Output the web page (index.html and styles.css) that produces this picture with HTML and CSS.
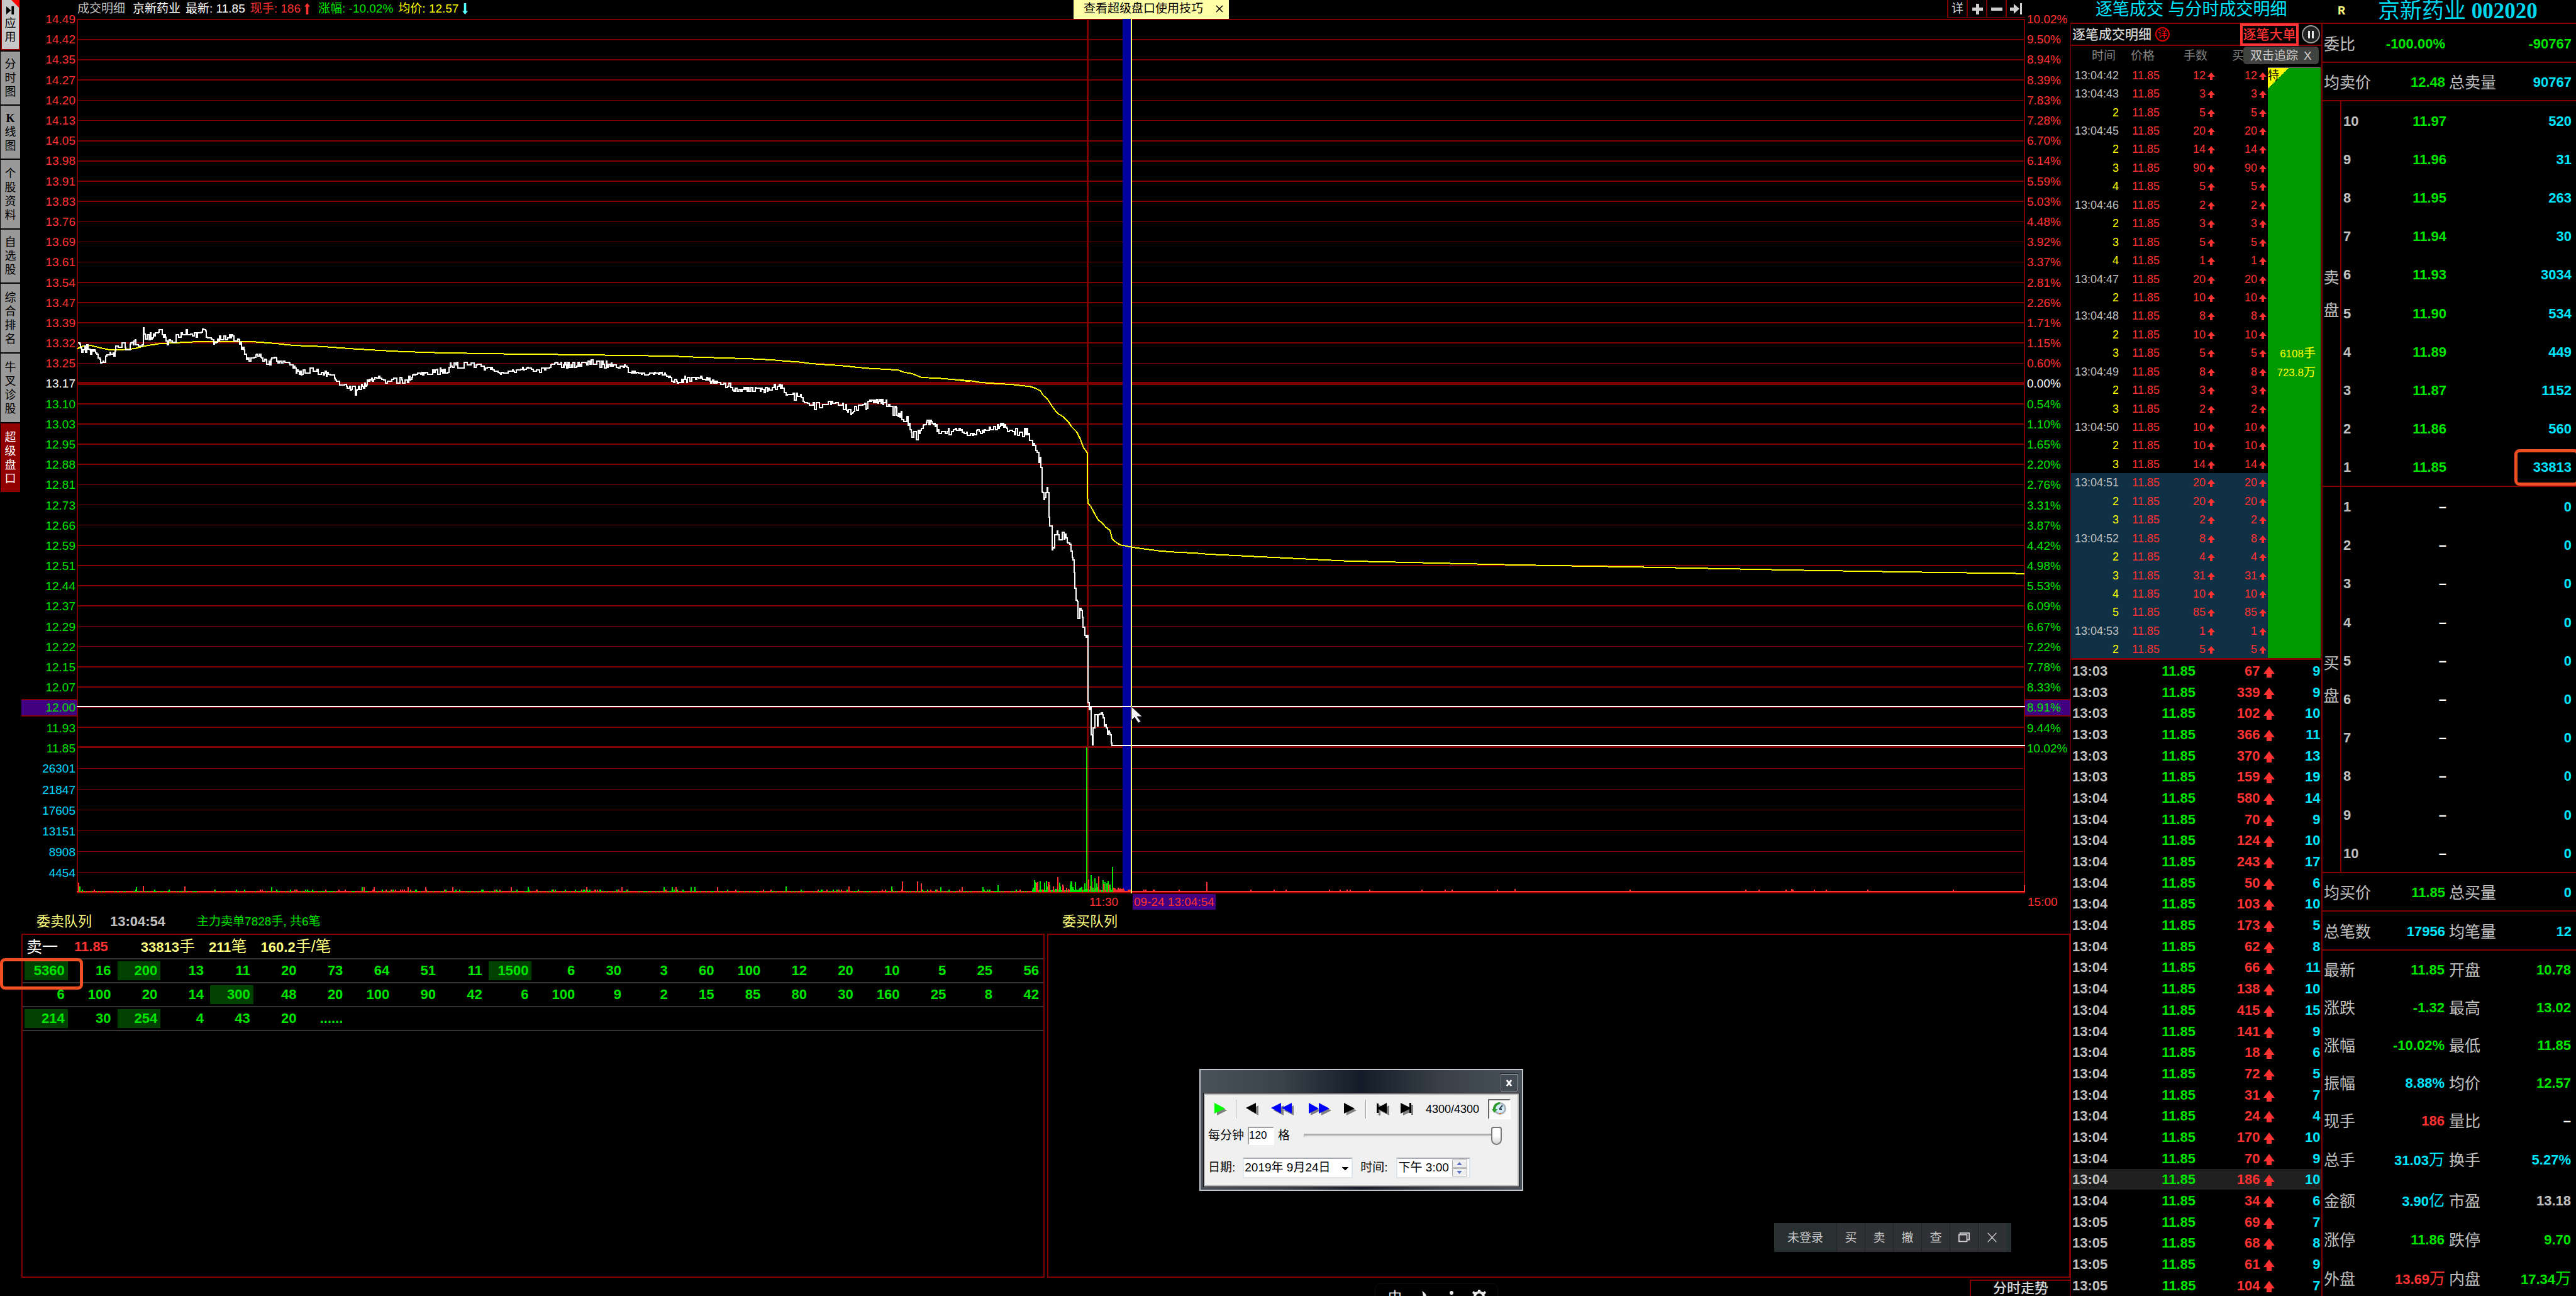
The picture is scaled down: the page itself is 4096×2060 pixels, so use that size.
FILE: index.html
```html
<!DOCTYPE html>
<html lang="zh-CN">
<head>
<meta charset="utf-8">
<title>京新药业 002020 超级盘口</title>
<link rel="stylesheet" href="styles.css">
</head>
<body>
<div class="app">

  <nav class="side">
    <button class="side-tab is-top" type="button">
      <svg class="side-arrow" viewBox="0 0 16 16"><path d="M1 1v14l8-7zM10 1h4v14h-4z"/></svg>应用</button>
    <button class="side-tab" type="button">分时图</button>
    <button class="side-tab" type="button"><b class="serif">K</b>线图</button>
    <button class="side-tab is-long" type="button">个股资料</button>
    <button class="side-tab" type="button">自选股</button>
    <button class="side-tab is-long" type="button">综合排名</button>
    <button class="side-tab is-long" type="button">牛叉诊股</button>
    <button class="side-tab is-long is-active" type="button">超级盘口</button>
  </nav>

  <main class="center">
    <header class="info">
      <span class="silver">成交明细</span>
      <span class="info-name">京新药业</span>
      <span>最新: 11.85</span>
      <span class="red">现手: 186<svg class="info-arrow" viewBox="0 0 10 20"><path fill="#ff3232" d="M5 0l5 6H7v14H3V6H0z"/></svg></span>
      <span class="green">涨幅: -10.02%</span>
      <span class="yellow">均价: 12.57<svg class="info-arrow" viewBox="0 0 10 20"><path fill="#54ffff" d="M5 20l5-6H7V0H3v14H0z"/></svg></span>
      <div class="tools">
        <button type="button">详</button>
        <button type="button" aria-label="放大"><svg viewBox="0 0 20 20"><path d="M8 2h5v6h6v5h-6v6H8v-6H2V8h6z"/></svg></button>
        <button type="button" aria-label="缩小"><svg viewBox="0 0 20 20"><path d="M1 8h18v5H1z"/></svg></button>
        <button type="button" aria-label="到末尾"><svg viewBox="0 0 20 20"><path d="M0 8h6V2l9 8-9 8v-5H0zM16 1h3v18h-3z"/></svg></button>
      </div>
      <div class="tip"><a href="#">查看超级盘口使用技巧</a><button type="button" aria-label="关闭"><svg viewBox="0 0 12 12"><path d="M1 1l10 10M11 1L1 11" stroke="#000" stroke-width="1.5"/></svg></button></div>
    </header>

    <section class="plot">
      <ol class="axis axis-left" id="axisLeft"></ol>
      <svg class="chart" id="chart" viewBox="153 37 3872 1740" preserveAspectRatio="none"></svg>
      <ol class="axis axis-right" id="axisRight"></ol>
      <svg class="pointer" viewBox="0 0 18 28"><path d="M1 1v22l5-5 6 9 4-2-6-8h8z" fill="#f4f4f4" stroke="#223"/></svg>
    </section>

    <div class="times">
      <span class="t-noon">11:30</span><span class="t-now">09-24 13:04:54</span><span class="t-end">15:00</span>
    </div>

    <div class="queue-titles">
      <h2><span>委卖队列</span><b>13:04:54</b><span class="note">主力卖单7828手, 共6笔</span></h2>
      <h2><span>委买队列</span></h2>
    </div>

    <section class="queues">
      <div class="queue">
        <p class="queue-head"><span class="cn white">卖一</span><b class="red q-price">11.85</b><b>33813<span class="cn">手</span></b><b>211<span class="cn">笔</span></b><b>160.2<span class="cn">手/笔</span></b></p>
        <table class="lots" id="lots"></table>
      </div>
      <div class="queue queue-buy">
        <form class="replay">
          <div class="replay-bar"><button class="replay-close" type="button" aria-label="关闭"><svg viewBox="0 0 12 14"><path d="M2 2l8 10M10 2L2 12" stroke="#fff" stroke-width="3"/></svg></button></div>
          <div class="replay-body">
            <div class="replay-tools">
              <button type="button" aria-label="播放"><svg width="20" height="20"><path fill="#808080" d="M4 4v16l16-8z"/><path fill="#0f0" d="M0 0v17l17-8z"/></svg></button>
              <i class="sep"></i>
              <button type="button" aria-label="后退"><svg width="20" height="20"><path fill="#808080" d="M20 4v16L6 12z"/><path d="M16 0v17L0 8z"/></svg></button>
              <button type="button" aria-label="快退"><svg width="36" height="20"><path fill="#808080" d="M20 4v16L4 12zM36 4v16L20 12z"/><path fill="#00f" d="M16 0v17L0 8zM33 0v17L17 8z"/></svg></button>
              <button type="button" aria-label="快进"><svg width="36" height="20"><path fill="#808080" d="M3 4v16l16-8zM20 4v16l16-8z"/><path fill="#00f" d="M0 0v17l16-8zM16 0v17l17-8z"/></svg></button>
              <button class="at-start" type="button" aria-label="前进"><svg width="20" height="20"><path fill="#808080" d="M4 4v16l16-8z"/><path d="M0 0v17l17-8z"/></svg></button>
              <i class="sep"></i>
              <button type="button" aria-label="到开头"><svg width="20" height="20"><path fill="#808080" d="M3 4h3v7l14-7v16L6 13v7H3z"/><path d="M0 1h3v6l13-7v17L3 10v6H0z"/></svg></button>
              <button type="button" aria-label="到结尾"><svg width="20" height="20"><path fill="#808080" d="M20 3h-3v7L4 4v16l13-6v5h3z"/><path d="M17 0h-3v7L0 0v17l14-7v6h3z"/></svg></button>
              <output>4300/4300</output>
              <button class="replay-clock" type="button" aria-label="历史"><svg width="24" height="26" viewBox="0 0 24 26"><circle cx="13" cy="12" r="10" fill="#a9b4bd"/><circle cx="13" cy="12" r="7" fill="#d3ecfa"/><path d="M13 2C6 2 2 7 2 13H0l4 6 5-6H6c0-4 3-8 7-8z" fill="#2c9a2c"/><path d="M12 13l5-6M12 13h4" stroke="#345" stroke-width="2"/><path d="M12 19h3v2h-3z" fill="#e07020"/></svg></button>
            </div>
            <div class="replay-line"><label for="speed">每分钟</label><input id="speed" class="speed" value="120"><span>格</span><input class="range" type="range" aria-label="速度" min="0" max="120" value="120"></div>
            <div class="replay-line"><label for="day">日期:</label><select id="day"><option>2019年 9月24日</option></select><label for="clock">时间:</label><span class="spin"><input id="clock" value="下午 3:00"><span class="spin-keys"><button type="button" aria-label="加"><svg viewBox="0 0 10 6"><path d="M5 0l5 6H0z"/></svg></button><button type="button" aria-label="减"><svg viewBox="0 0 10 6"><path d="M0 0h10L5 6z"/></svg></button></span></span></div>
          </div>
        </form>
        <div class="trade"><span>未登录</span><button type="button">买</button><button type="button">卖</button><button type="button">撤</button><button type="button">查</button><button type="button" aria-label="窗口"><svg viewBox="0 0 22 20"><path d="M2 5h14v12H2zM4 4V2h16v12h-3" fill="none" stroke="#d0d0d0" stroke-width="2"/></svg></button><button type="button" aria-label="关闭"><svg viewBox="0 0 22 20"><path d="M3 2l15 16M18 2L3 18" stroke="#c8c8c8" stroke-width="1.5"/></svg></button></div>
      </div>
    </section>

    <footer class="foot">
      <div class="ime"><span>中</span><svg width="16" height="22"><path fill="#eee" d="M3 2c6 3 9 8 8 20H0C5 16 6 9 3 2z"/></svg><svg width="8" height="20"><circle cx="4" cy="5" r="3" fill="#eee"/></svg><svg width="22" height="22" viewBox="0 0 22 22"><circle cx="11" cy="11" r="7" fill="none" stroke="#eee" stroke-width="4"/><path d="M9 0h4v4H9zM2 2l4 3-3 3-3-3zM20 2l-4 3 3 3 3-3z" fill="#eee"/></svg></div>
      <button class="foot-tab" type="button">分时走势</button>
    </footer>
  </main>

  <section class="ticks">
    <h1 class="ticks-title">逐笔成交 与分时成交明细</h1>
    <div class="ticks-head"><h2>逐笔成交明细</h2><a class="detail" href="#">详</a><button class="big" type="button">逐笔大单</button><button class="pause" type="button" aria-label="暂停"><i></i><i></i></button></div>
    <div class="ticks-cols"><span>时间</span><span>价格</span><span>手数</span><span>买</span><div class="hint">双击追踪<button type="button" aria-label="关闭提示">X</button></div></div>
    <div class="ticks-body">
      <table class="tape" id="tape"></table>
      <div class="block"><span class="tag">特</span><span>6108<span class="cn-s">手</span></span><span>723.8<span class="cn-s">万</span></span></div>
    </div>
    <table class="minutes" id="minutes"></table>
  </section>

  <aside class="quote">
    <h1><span class="flag">R</span><span>京新药业 <b>002020</b></span></h1>
    <table class="stats ruled" id="stat0"></table>
    <table class="stats ruled" id="stat1"></table>
    <div class="book"><div class="book-side">卖<br>盘</div><table id="asks"></table></div>
    <div class="book"><div class="book-side">买<br>盘</div><table id="bids"></table></div>
    <table class="stats ruled" id="stat2"></table>
    <table class="stats ruled" id="stat3"></table>
    <table class="stats" id="stat4"></table>
  </aside>
</div>
<script src="app.js"></script>
</body>
</html>
```
FILE: styles.css
```css
* { box-sizing: border-box; }
html, body { margin: 0; height: 100%; background: #000; }
body {
  font: 19px/24px "Liberation Sans", "Noto Sans CJK SC", sans-serif;
  color: #fff;
  overflow: hidden;
}
h1, h2, p, ol { margin: 0; padding: 0; font-weight: 400; font-size: inherit; list-style: none; }
button, input, select { font: inherit; color: inherit; border: 0; padding: 0; margin: 0; background: none; border-radius: 0; }
a { color: inherit; text-decoration: none; }
table { border-collapse: collapse; border-spacing: 0; width: 100%; height: 100%; table-layout: fixed; }
td, th { padding: 0; text-align: right; white-space: nowrap; }
svg { display: block; }
.red { color: #ff3232; }
.green { color: #00e600; }
.yellow { color: #ffff00; }
.cyan { color: #00e6ff; }
.white { color: #fff; }
.silver { color: #c0c0c0; }
.serif { font-family: "Liberation Serif", serif; }
.cn { font-size: 25px; font-weight: 400; }
.cn-s { font-size: 19px; }

.app { display: grid; grid-template-columns: 34px 1fr 399px 405px; height: 100vh; }

/* left tab strip */
.side { display: flex; flex-direction: column; gap: 2px; padding: 0 1px; }
.side-tab {
  width: 31px; height: 84px; padding: 0 6px; background: #999; color: #000;
  font-size: 18px; line-height: 22px; word-break: break-all; position: relative;
}
.side-tab.is-long { height: 109px; }
.side-tab.is-top { height: 80px; background: #c8c8c8; border: 2px solid #900000; border-top: 0; padding: 0 4px; }
.side-tab.is-top::after {
  content: ""; position: absolute; top: 0; right: 0;
  border: 6px solid; border-color: #f00 #f00 transparent transparent;
}
.side-tab.is-active { background: #900000; color: #fff; }
.side-arrow { width: 15px; height: 15px; margin: 0 auto 2px; }

/* centre column */
.center { display: grid; grid-template-columns: minmax(0, 1fr); grid-template-rows: 30px 1390fr 25px 39px 547fr 29px; min-width: 0; min-height: 0; }
.info { display: flex; align-items: center; gap: 8px; padding: 0 72px 2px 89px; position: relative; white-space: pre; }
.info-name { margin-left: 4px; }
.info-arrow { display: inline-block; width: 9px; height: 18px; margin: 0 5px 0 6px; vertical-align: -3px; }
.tools { margin-left: auto; display: flex; align-self: flex-start; }
.tools button { width: 31px; height: 28px; border-left: 2px solid #800000; display: grid; place-items: center; color: #d0d0d0; border-bottom: 1px solid #800000; }
.tools svg { width: 20px; height: 20px; fill: #d0d0d0; }
.tip {
  position: absolute; left: 1673px; top: 0; width: 247px; height: 30px; z-index: 2;
  background: #ffffa8; color: #000; display: flex; align-items: center; padding: 0 0 3px 16px; gap: 20px;
}
.tip svg { width: 12px; height: 12px; }

.plot { display: grid; grid-template-columns: 88px 1fr 72px; min-height: 0; position: relative; }
.chart { width: 100%; height: 100%; min-height: 0; shape-rendering: crispEdges; }
.axis { display: grid; margin: -15px 0 -1px; position: relative; }
.axis-left { grid-template-rows: repeat(37, 322fr) repeat(6, 331fr) 166fr; text-align: right; }
.axis-right { grid-template-rows: repeat(37, 322fr) 2152fr; }
.axis li { display: grid; align-items: center; min-height: 0; line-height: 28px; color: #ff3232; }
.axis-left span { padding-right: 2px; }
.axis-right span { padding-left: 3px; }
.axis .is-flat { color: #fff; }
.axis .is-down { color: #00e600; }
.axis .is-vol { color: #00d8ff; }
.axis .is-cross span { background: #400080; border: 1px solid #800000; border-width: 2px 0; line-height: 24px; }
.pointer { position: absolute; left: 1764px; top: 1092px; width: 18px; height: 28px; }

.times { position: relative; color: #ff3232; }
.times span { position: absolute; top: 1px; line-height: 25px; }
.t-noon { left: 1698px; }
.t-now { left: 1767px; padding: 0 2px; background: #400080; }
.t-end { right: 8px; width: 60px; }

.queue-titles, .queues { display: grid; grid-template-columns: minmax(0, 1fr) minmax(0, 1fr); gap: 4px; }
.queue-titles h2 { display: flex; align-items: center; padding-left: 24px; color: #ffff80; font-size: 22px; }
.queue-titles b { color: #c0c0c0; margin-left: 29px; }
.note { font-size: 19px; color: #00e600; margin-left: 50px; }
.queue { border: 2px solid #800000; position: relative; min-height: 0; }
.queue-head { display: flex; align-items: center; height: 37px; font-size: 22px; padding-left: 6px; color: #ffff80; }
.queue-head b { margin-right: 22px; }
.queue-head .q-price { margin: 0 52px 0 26px; }
.lots { height: auto; border-top: 2px solid #333; }
.lots tr { height: 38px; border-bottom: 2px solid #333; }
.lots td { font-size: 22px; font-weight: 700; color: #00e600; padding: 0 2px 0 3px; position: relative; }
.lots span { display: block; line-height: 30px; padding-right: 5px; }
.lots .is-big span { background: #004000; }
.ring { position: absolute; border: 5px solid #f04e23; border-radius: 8px; pointer-events: none; }
.lots .ring { left: -36px; top: -2px; width: 132px; height: 50px; padding: 0; z-index: 2; }

/* replay window */
.replay {
  position: absolute; left: 240px; top: 213px; width: 515px; height: 194px;
  border: 2px solid #c4c8cc; padding: 0 5px 5px; color: #000;
  background: linear-gradient(90deg, #49515b, #3a424b 25%, #131c28 50%, #394049 75%, #49515b);
}
.replay-bar { height: 37px; position: relative; }
.replay-close { position: absolute; right: 1px; top: 5px; width: 29px; height: 30px; border: 2px solid #a8adb2; outline: 1px solid #20252c; outline-offset: -1px; background: #434b55; display: grid; place-items: center; }
.replay-close svg { width: 11px; height: 13px; }
.replay-body { border: 2px solid #b4b4b4; outline: 1px solid #000; background: #f0f0f0; height: 148px; padding-top: 4px; font-size: 19px; }
.replay-tools { display: grid; grid-template-columns: 49px 2px 48px 48px 72px 36px 2px 52px 24px 117px 36px; height: 38px; align-items: center; justify-items: center; }
.replay-tools .at-start { justify-self: start; margin-left: 2px; }
.sep { width: 2px; height: 30px; background: #a0a0a0; border-right: 1px solid #fff; }
.replay output { font-size: 18px; padding-left: 4px; }
.replay-clock { width: 36px; height: 32px; background: #fafafa; border: 2px solid #fff; border-color: #666 #fff #fff #666; display: grid; place-items: center; }
.replay-line { display: flex; align-items: center; height: 46px; padding-left: 5px; }
.replay-line + .replay-line { height: 56px; }
.speed { width: 42px; height: 29px; background: #fff; border: 2px solid #a0a0a0; border-right-color: #fff; border-bottom-color: #fff; font-size: 17px; margin: 0 6px 0 6px; }
.range { -webkit-appearance: none; appearance: none; width: 315px; height: 30px; margin-left: 22px; }
.range::-webkit-slider-runnable-track { height: 6px; background: #e7eaea; border-top: 3px solid #b0b0b0; border-left: 1px solid #a0a0a0; }
.range::-webkit-slider-thumb { -webkit-appearance: none; width: 17px; height: 29px; margin-top: -14px; border: 2px solid #777; border-radius: 4px 4px 9px 9px; background: linear-gradient(#fff 50%, #d4d4d4); }
.replay select { width: 175px; height: 33px; border: 2px solid #e0e6ee; border-top-color: #aaaeb4; margin: 0 12px 0 12px; -webkit-appearance: none; appearance: none; padding-left: 1px; font-size: 19px;
  background: linear-gradient(45deg, transparent 6px, #000 0) no-repeat 154px 13px / 7px 7px, linear-gradient(-45deg, transparent 6px, #000 0) no-repeat 161px 13px / 7px 7px, #fff; }
.spin { display: flex; width: 118px; height: 33px; margin-left: 13px; background: #fff; border: 2px solid #e0e6ee; border-top-color: #aaaeb4; }
.spin input { width: 87px; padding-left: 2px; font-size: 19px; }
.spin-keys { display: grid; gap: 1px; width: 24px; padding: 1px 0; }
.spin-keys button { background: #eee; border: 1px solid #aaa; display: grid; place-items: center; }
.spin-keys svg { width: 9px; height: 5px; fill: #5a70c0; }

.trade { position: absolute; right: 92px; bottom: 39px; height: 46px; display: flex; background: #283032; padding-right: 8px; color: #c8c8c8; line-height: 48px; }
.trade span { width: 99px; text-align: center; }
.trade button { width: 45px; background: #2f3135; border-left: 1px solid #222528; display: grid; place-items: center; }
.trade svg { width: 20px; height: 18px; }

.foot { display: flex; justify-content: flex-end; position: relative; padding-top: 3px; overflow: hidden; }
.foot-tab { width: 160px; border: 2px solid #800000; border-width: 2px 0 0 2px; font-size: 22px; font-weight: 500; color: #d8d8d8; line-height: 24px; }
.ime { position: absolute; left: 2152px; top: 9px; width: 196px; height: 48px; border: 1px solid #0e0e0e; border-radius: 8px; display: flex; justify-content: space-between; padding: 9px 18px 0 20px; color: #eee; font-size: 22px; }

/* tick tape */
.ticks { display: grid; grid-template-rows: 36px 37px 31px 945fr 1011fr; grid-template-columns: minmax(0, 1fr); min-height: 0; position: relative; }
.ticks-title { padding-left: 40px; font-size: 27px; line-height: 30px; color: #00e6ff; white-space: nowrap; }
.ticks-head, .ticks-cols, .ticks-body, .minutes { border-left: 1px solid #800000; }
.ticks-head { border-top: 2px solid #800000; border-bottom: 2px solid #800000; display: flex; align-items: center; padding: 0 2px; }
.ticks-head h2 { font-size: 21px; font-weight: 500; color: #d0d0d0; }
.detail { width: 23px; height: 23px; margin-left: 6px; border: 2px solid #d00; border-radius: 50%; color: #f00; font-size: 15px; line-height: 18px; text-align: center; }
.big { margin-left: auto; width: 93px; height: 36px; border: 4px solid #ff3232; color: #ff3232; font-size: 21px; line-height: 26px; font-weight: 500; white-space: nowrap; }
.pause { width: 29px; height: 29px; margin-left: 5px; border-radius: 50%; border: 2px solid #999; background: #222; display: flex; gap: 3px; align-items: center; justify-content: center; }
.pause i { width: 3px; height: 12px; background: #eee; }
.ticks-cols { display: grid; grid-template-columns: 71px 62px 84px 58px; color: #808080; text-align: right; position: relative; line-height: 32px; overflow: hidden; }
.hint { position: absolute; left: 274px; top: 1px; width: 120px; height: 28px; line-height: 30px; background: #40423f; border-radius: 5px; color: #d0d0d0; display: flex; gap: 9px; padding-left: 11px; }
.ticks-body { display: grid; grid-template-columns: 313px minmax(0, 1fr); border-bottom: 3px solid #800000; min-height: 0; }
.tape { font-size: 18px; line-height: 20px; color: #ff3232; }
.tape td { padding-top: 2px; }
.tape td:first-child { width: 76px; }
.tape td:nth-child(2) { width: 65px; }
.tape td:nth-child(3) { width: 88px; }
.tape td:nth-child(4) { padding-right: 2px; }
.tape .is-sel { background: #0f3045; }
.tape svg { display: inline-block; width: 12px; height: 12px; margin-left: 3px; vertical-align: -1px; fill: #ff3232; }
.block { background: #009900; border-top: 1px solid #707070; margin: 3px 1px 0 0; display: flex; flex-direction: column; justify-content: center; align-items: flex-end; padding: 0 8px 0 0; color: #ff0; font-size: 17px; line-height: 29px; position: relative; }
.tag { position: absolute; left: 0; top: 0; width: 33px; height: 33px; overflow: hidden; color: #000; background: linear-gradient(135deg, #ff0 50%, transparent 0); font-size: 18px; line-height: 24px; }

.minutes td { font-size: 22px; font-weight: 700; line-height: 24px; padding-top: 2px; }
.minutes td:first-child { text-align: left; padding-left: 2px; width: 70px; }
.minutes td:nth-child(2) { width: 129px; }
.minutes td:nth-child(3) { width: 125px; }
.minutes td:nth-child(4) { padding-right: 1px; }
.minutes svg { display: inline-block; width: 18px; height: 18px; margin-left: 5px; vertical-align: -3px; fill: #ff3232; }
.minutes .is-sel { background: #202020; }

/* quote board */
.quote { display: grid; grid-template-columns: minmax(0, 1fr); grid-template-rows: 36px 64px 61fr 613fr 614fr 61fr 62fr 553fr; margin-bottom: -4px; font-size: 22px; font-weight: 700; }
.quote h1 { display: flex; align-items: center; gap: 52px; padding-left: 26px; font: 35px/34px "Liberation Serif", "Noto Sans CJK SC", serif; color: #00d8f0; white-space: nowrap; }
.flag { font: 700 20px/34px "Liberation Mono", monospace; color: #ffff80; }
.stats { border-left: 2px solid #800000; }
.stats td, .stats th, .book td, .book th { padding-top: 3px; }
#stat0 { border-top: 2px solid #800000; }
.stats.ruled { border-bottom: 2px solid #800000; }
.stats th { text-align: left; font-size: 25px; font-weight: 400; color: #c0c0c0; width: 90px; padding-left: 2px; }
.stats td:nth-child(2) { width: 106px; }
.stats th:nth-child(3) { width: 96px; padding-left: 6px; }
.stats td:last-child, .book td:last-child { padding-right: 7px; }
.book { display: grid; grid-template-columns: 30px minmax(0, 1fr); border-bottom: 2px solid #800000; border-left: 2px solid #800000; min-height: 0; }
.book-side { border-right: 2px solid #800000; display: grid; align-content: center; text-align: center; font-size: 25px; font-weight: 400; line-height: 52px; color: #c0c0c0; }
.book th { text-align: left; width: 60px; padding-left: 3px; color: #c0c0c0; }
.book td { width: 107px; position: relative; }
.book td:last-child { width: auto; }
.book .ring { right: -5px; top: 3px; width: 103px; height: 58px; }
```
FILE: app.js
```js
const $ = id => document.getElementById(id);

// axis labels
const prices = '14.49 14.42 14.35 14.27 14.20 14.13 14.05 13.98 13.91 13.83 13.76 13.69 13.61 13.54 13.47 13.39 13.32 13.25 13.17 13.10 13.03 12.95 12.88 12.81 12.73 12.66 12.59 12.51 12.44 12.37 12.29 12.22 12.15 12.07 12.00 11.93 11.85'.split(' ');
const rates = '10.02 9.50 8.94 8.39 7.83 7.28 6.70 6.14 5.59 5.03 4.48 3.92 3.37 2.81 2.26 1.71 1.15 0.60 0.00 0.54 1.10 1.65 2.20 2.76 3.31 3.87 4.42 4.98 5.53 6.09 6.67 7.22 7.78 8.33 8.91 9.44 10.02'.split(' ');
const tone = i => (i === 18 ? 'is-flat' : i > 18 ? 'is-down' : '') + (i === 34 ? ' is-cross' : '');
$('axisLeft').innerHTML = prices.map((p, i) => `<li class="${tone(i)}"><span>${p}</span></li>`).join('')
  + [26301, 21847, 17605, 13151, 8908, 4454].map(v => `<li class="is-vol"><span>${v}</span></li>`).join('');
$('axisRight').innerHTML = rates.map((p, i) => `<li class="${tone(i)}"><span>${p}%</span></li>`).join('');

// chart
let seed = 7;
const rnd = () => (seed = (seed * 16807) % 2147483647) / 2147483647;
const rect = (x, y, w, h, c) => `<rect x="${x}" y="${y}" width="${w}" height="${h}" fill="${c}"/>`;
const parts = [
  { x0: 0, y0: 0, sx: 1 / 1.568, sy: 1 / 1.568,
    avg: '241,1088 255,1080 285,1077 320,1086 345,1091 370,1091 420,1087 450,1079 500,1071 560,1068 640,1064 775,1064 850,1070 920,1077 1000,1080 1110,1088 1230,1095 1340,1099 1440,1101 1568,1103',
    band: '243,1070,1090 245,1062,1090 250,1075,1090 262,1080,1105 272,1075,1095 283,1080,1105 290,1085,1095 300,1100,1110 312,1120,1135 320,1130,1142 328,1115,1130 340,1100,1112 355,1092,1110 368,1070,1092 390,1070,1092 400,1082,1092 412,1065,1090 425,1060,1075 437,1060,1085 444,1050,1075 447,1020,1060 453,1030,1056 460,1045,1055 467,1040,1062 480,1028,1048 490,1035,1045 500,1026,1030 507,1030,1045 515,1050,1062 525,1065,1082 533,1055,1070 543,1055,1082 552,1042,1052 570,1035,1052 580,1028,1045 600,1038,1048 615,1038,1050 632,1025,1042 645,1035,1052 655,1045,1055 668,1060,1074 680,1050,1062 700,1046,1060 722,1044,1062 740,1055,1065 750,1065,1075 757,1082,1095 765,1100,1112 775,1115,1125 790,1115,1125 800,1104,1115 812,1105,1120 825,1120,1128 840,1125,1140 855,1112,1130 870,1122,1132 890,1122,1130 905,1135,1140 915,1140,1150 932,1160,1175 945,1155,1165 965,1148,1165 985,1148,1165 1005,1155,1168 1020,1160,1175 1035,1162,1178 1048,1180,1195 1060,1195,1210 1075,1198,1205 1090,1205,1212 1100,1205,1225 1110,1205,1235 1118,1205,1215 1135,1195,1210 1150,1183,1195 1175,1172,1183 1195,1178,1190 1215,1185,1200 1240,1175,1195 1270,1175,1195 1290,1165,1170 1330,1160,1168 1370,1150,1165 1395,1135,1162 1410,1132,1145 1450,1128,1150 1480,1132,1145 1505,1138,1150' },
  { x0: 960, y0: 560, sx: 0.6378, sy: 1 / 3,
    avg: '66,431 134,432 370,438 588,444 660,450 770,456 860,462 910,468 945,474 990,480 1020,488 1050,493 1095,498 1140,505 1165,511 1210,518 1260,523 1295,528 1312,540 1340,550 1367,572 1415,575 1455,582 1490,588 1520,596',
    band: '0,505,525 35,515,530 50,540,550 75,520,548 100,530,540 115,515,530 140,505,520 165,520,540 190,515,540 205,515,535 215,480,490 260,480,515 300,480,505 340,468,490 360,475,505 380,470,515 400,485,505 440,500,520 455,515,540 475,540,550 495,535,550 510,550,568 520,540,550 550,535,550 565,545,560 580,565,585 600,585,605 620,565,600 660,570,595 690,565,580 705,580,605 725,595,605 750,600,615 770,605,650 790,625,652 830,630,652 865,635,652 880,630,660 900,615,645 925,612,635 940,640,660 948,670,720 960,670,718 985,665,700 1000,690,715 1010,725,740 1030,720,765 1060,715,745 1090,715,725 1110,720,765 1130,730,760 1143,745,795 1160,745,765 1175,735,780 1195,725,760 1210,697,720 1235,700,725 1265,715,745 1275,740,795 1290,750,795 1310,790,830 1325,810,860 1335,850,900 1341,900,975 1350,880,940 1357,890,945 1365,860,890 1380,830,850 1395,830,850 1410,850,880 1425,870,915 1440,878,905 1465,880,915' },
  { x0: 1900, y0: 700, sx: 1 / 3, sy: 1 / 1.4,
    avg: '0,77 88,80 155,85 250,88 330,90 385,93 445,96 470,100 505,108 520,120 545,130 580,155 605,170 640,180 672,195 690,208 720,222 740,240 760,265 783,280 784,398 789,422 805,430 830,452 850,468 870,475 895,488 920,497 932,520 950,528 980,537 1047,543 1100,547 1170,551 1215,554 1300,557 1430,560 1500,563 2331,582 3357,593 4092,599 5070,608 5880,614 6372,617',
    band: '0,212,222 30,215,222 45,222,232 100,225,232 135,213,228 180,215,222 220,208,220 255,200,212 290,200,210 310,212,222 350,214,230 400,214,236 425,214,225 440,235,245 470,260,270 485,275,292 500,290,315 507,310,335 513,345,390 520,375,420 530,375,405 545,378,415 553,405,450 562,460,490 570,490,540 579,510,578 588,492,530 600,498,520 620,498,525 650,505,520 672,522,535 690,550,570 702,590,630 712,665,695 722,690,720 730,715,745 745,715,745 755,745,770 768,770,805 783,790,808 785,900,940 790,940,985 800,985,1010 806,1020,1060 812,1060,1097 822,1040,1075 836,995,1025 848,1010,1055 865,1003,1020 880,1020,1050 895,1045,1065 910,1055,1065 920,1065,1085 928,1085,1097' }
];
const avg = [], band = [];
for (const p of parts) {
  const map = s => s.split(' ').map(t => t.split(',').map((n, i) => i ? p.y0 + n * p.sy : p.x0 + n * p.sx));
  avg.push(...map(p.avg));
  band.push(...map(p.band));
}
let price = '', last = null, seg = 0;
for (let x = 155; x < 2210; x += 2) {
  while (seg < band.length - 2 && band[seg + 1][0] < x) seg++;
  const a = band[seg], b = band[seg + 1], t = Math.max(0, Math.min(1, (x - a[0]) / (b[0] - a[0])));
  const top = a[1] + (b[1] - a[1]) * t, bottom = a[2] + (b[2] - a[2]) * t, r = rnd();
  const wanted = r < .34 ? top : r > .66 ? bottom : (top + bottom) / 2;
  const y = last !== null && rnd() < .35 && last >= top && last <= bottom ? last : Math.round(wanted / 2) * 2;
  price += last === null ? `M${x} ${y}` : `H${x}V${y}`;
  last = y;
}
price += 'H2210V1483H4025';

let g = '';
for (let i = 0; i < 37; i++) {
  const thick = i === 18 ? 6 : i === 36 ? 4 : 2;
  g += rect(153, 37 + i * 40.25 - (thick > 2 ? 2 : 0), 3872, thick, '#800000');
}
for (let i = 1; i < 7; i++) g += rect(153, 1486 + i * 41.35, 3872, 2, '#800000');
g += rect(153, 37, 2, 1740, '#800000') + rect(4023, 37, 2, 1740, '#800000');
g += rect(2160, 37, 4, 1740, '#800000') + rect(2232, 37, 16, 1740, '#0000a0');

// volume bars
g += rect(153, 1772, 3872, 3, '#ff3232') + rect(153, 1775, 3872, 2, '#a00000');
const bar = (x, h, c) => { g += rect(x, 1774 - h, 2.5, h, c ? '#00e600' : '#ff3232'); };
for (let x = 157; x < 4020; x += 2) {
  const r = rnd(), c = rnd() < .5;
  if (x < 2050) { if (r < .55) bar(x, r < .02 ? 9 : r < .12 ? 5 : 2, c); }
  else if (x < 2160) bar(x, 3 + r * r * 20, rnd() < .62);
  else if (x < 2210) bar(x, 3 + r * r * 24, rnd() < .6);
  else if (x < 2235) bar(x, 4 + r * 5, 0);
  else if (x < 2320) { if (r < .3) bar(x, 5, 0); }
  else if (r < .03) bar(x, 5, 0);
}
[[155, 18, 0], [158, 11, 1], [284, 12, 0], [367, 11, 0], [1380, 9, 1], [1561, 11, 1], [1687, 11, 0], [1771, 11, 1], [1793, 21, 0], [1823, 21, 0], [1830, 17, 0], [1983, 13, 1], [2057, 19, 1], [2067, 21, 1], [2084, 19, 0], [2101, 29, 0], [2128, 21, 1], [2168, 33, 1], [2175, 27, 1], [2183, 31, 0], [2210, 49, 1], [2398, 19, 0], [3010, 6, 0], [3560, 6, 0], [4022, 13, 0]].forEach(v => bar(...v));
g += rect(2159, 1486, 3, 288, '#00e600');

g += `<polyline points="${avg.map(p => p.map(n => n.toFixed(1))).join(' ')}" fill="none" stroke="#ffff00" stroke-width="2.5"/>`;
g += `<path d="${price}" fill="none" stroke="#fff" stroke-width="2.5"/>`;
g += rect(153, 1404, 3872, 2, '#fff') + rect(2248, 37, 2, 1740, '#ffff66');
$('chart').innerHTML = g;

// sell queue
const lots = [
  '5360* 16 200* 13 11 20 73 64 51 11 1500* 6 30 3 60 100 12 20 10 5 25 56',
  '6 100 20 14 300* 48 20 100 90 42 6 100 9 2 15 85 80 30 160 25 8 42',
  '214* 30 254* 4 43 20 ......'
];
$('lots').innerHTML = lots.map((row, r) => {
  const cells = row.split(' ');
  while (cells.length < 22) cells.push('');
  return '<tr>' + cells.map((v, c) => `<td${v.endsWith('*') ? ' class="is-big"' : ''}><span>${v.replace('*', '')}</span>${!r && !c ? '<i class="ring"></i>' : ''}</td>`).join('') + '</tr>';
}).join('');

// tick tape
const up = '<svg viewBox="0 0 12 12"><path d="M6 0l6 7H8v5H4V7H0z"/></svg>';
const upBig = '<svg viewBox="0 0 18 18"><path d="M9 0l9 12h-5v6H5v-6H0z"/></svg>';
const tape = '13:04:42 12,13:04:43 3,2 5,13:04:45 20,2 14,3 90,4 5,13:04:46 2,2 3,3 5,4 1,13:04:47 20,2 10,13:04:48 8,2 10,3 5,13:04:49 8,2 3,3 2,13:04:50 10,2 10,3 14,13:04:51 20,2 20,3 2,13:04:52 8,2 4,3 31,4 10,5 85,13:04:53 1,2 5'.split(',');
$('tape').innerHTML = tape.map((t, i) => {
  const [time, n] = t.split(' ');
  return `<tr${i > 21 ? ' class="is-sel"' : ''}><td class="${time.length > 1 ? 'silver' : 'yellow'}">${time}</td><td>11.85</td><td>${n}${up}</td><td>${n}${up}</td></tr>`;
}).join('');

// per-minute trades
const minutes = '67 9,339 9,102 10,366 11,370 13,159 19,580 14,70 9,124 10,243 17,50 6,103 10,173 5,62 8,66 11,138 10,415 15,141 9,18 6,72 5,31 7,24 4,170 10,70 9,186 10,34 6,69 7,68 8,61 9,104 7'.split(',');
$('minutes').innerHTML = minutes.map((t, i) => {
  const [n, c] = t.split(' ');
  return `<tr${i === 24 ? ' class="is-sel"' : ''}><td class="silver">13:0${i < 6 ? 3 : i < 26 ? 4 : 5}</td><td class="green">11.85</td><td class="red">${n}${upBig}</td><td class="cyan">${c}</td></tr>`;
}).join('');

// order book
const asks = '10 11.97 520,9 11.96 31,8 11.95 263,7 11.94 30,6 11.93 3034,5 11.90 534,4 11.89 449,3 11.87 1152,2 11.86 560,1 11.85 33813'.split(',');
$('asks').innerHTML = asks.map((t, i) => {
  const [l, p, n] = t.split(' ');
  return `<tr><th>${l}</th><td class="green">${p}</td><td class="cyan">${n}${i === 9 ? '<i class="ring"></i>' : ''}</td></tr>`;
}).join('');
$('bids').innerHTML = [1, 2, 3, 4, 5, 6, 7, 8, 9, 10].map(l => `<tr><th>${l}</th><td class="white">–</td><td class="cyan">0</td></tr>`).join('');

// summary figures
const unit = s => s.replace(/[万亿]/, m => `<span class="cn">${m}</span>`);
const fill = (id, rows) => {
  $(id).innerHTML = rows.map(r => `<tr><th>${r[0]}</th><td class="${r[2]}">${unit(r[1])}</td><th>${r[3]}</th><td class="${r[5]}">${unit(r[4])}</td></tr>`).join('');
};
fill('stat0', [['委比', '-100.00%', 'green', '', '-90767', 'green']]);
fill('stat1', [['均卖价', '12.48', 'green', '总卖量', '90767', 'cyan']]);
fill('stat2', [['均买价', '11.85', 'green', '总买量', '0', 'cyan']]);
fill('stat3', [['总笔数', '17956', 'cyan', '均笔量', '12', 'cyan']]);
fill('stat4', [
  ['最新', '11.85', 'green', '开盘', '10.78', 'green'],
  ['涨跌', '-1.32', 'green', '最高', '13.02', 'green'],
  ['涨幅', '-10.02%', 'green', '最低', '11.85', 'green'],
  ['振幅', '8.88%', 'cyan', '均价', '12.57', 'green'],
  ['现手', '186', 'red', '量比', '–', 'white'],
  ['总手', '31.03万', 'cyan', '换手', '5.27%', 'cyan'],
  ['金额', '3.90亿', 'cyan', '市盈', '13.18', 'silver'],
  ['涨停', '11.86', 'green', '跌停', '9.70', 'green'],
  ['外盘', '13.69万', 'red', '内盘', '17.34万', 'green']
]);
```
